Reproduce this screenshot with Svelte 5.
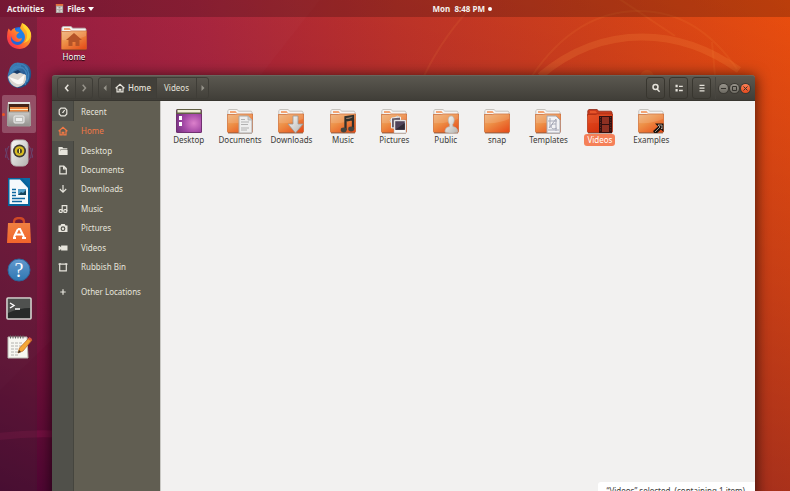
<script lang="ts">
type Place = { name: string; icon: string };

const places: Place[] = [
	{ name: 'Recent', icon: 'recent' },
	{ name: 'Home', icon: 'home' },
	{ name: 'Desktop', icon: 'folder' },
	{ name: 'Documents', icon: 'document' },
	{ name: 'Downloads', icon: 'download' },
	{ name: 'Music', icon: 'music' },
	{ name: 'Pictures', icon: 'camera' },
	{ name: 'Videos', icon: 'video' },
	{ name: 'Rubbish Bin', icon: 'bin' },
];

const files = ['Desktop', 'Documents', 'Downloads', 'Music', 'Pictures', 'Public', 'snap', 'Templates', 'Videos', 'Examples'];

const apps = ['Firefox', 'Thunderbird', 'Files', 'Rhythmbox', 'LibreOffice Writer', 'Ubuntu Software', 'Help', 'Terminal', 'Text Editor'];

let place = $state('Home');
let selected = $state('Videos');
</script>

{#snippet symbol(name: string)}
	<svg class="symbol" viewBox="0 0 10 10" aria-hidden="true">
		{#if name === 'recent'}
			<path class="line" d="M3 1.2h4L8.8 3v4L7 8.8H3L1.2 7V3zM5 5.4 6.7 3M4.2 5.5H5.5M3.4 1.1h3.2" />
		{:else if name === 'home'}
			<path class="line" d="M.6 5.3 5 1.2l4.4 4.1M2 4.6v4.2h2.2V6.4h1.6v2.4H8V4.6" />
		{:else if name === 'folder'}
			<path d="M.5 1h3.8l1 1.3h4v1.2H2.3v5.2H.5zM2.8 4.1h6.8V9H1z" />
		{:else if name === 'document'}
			<path class="line" d="M1.8 1.1h4l2.5 2.5v5.3H1.8zM5.6 1.4v2.4h2.5" />
		{:else if name === 'download'}
			<path class="line" d="M5 1v7M1.8 5 5 8.2 8.2 5" />
		{:else if name === 'music'}
			<path class="line" d="M4.2 7V1.700h4.600V7" />
			<rect class="line" x="1.200" y="5.600" width="3" height="2.800" rx="1" />
			<rect class="line" x="5.800" y="5.600" width="3" height="2.800" rx="1" />
		{:else if name === 'camera'}
			<path fill-rule="evenodd" d="M.5 2.5h2L3.3 1h3.4l.8 1.5h2V9h-9zM5 3.3a2.4 2.4 0 1 0 0 4.8 2.4 2.4 0 0 0 0-4.8" />
			<circle cx="5" cy="5.7" r="1.2" />
		{:else if name === 'video'}
			<path d="M.6 3h1.1l1.4 1.3V2.6h6.4v5H3.1V6L1.7 7.3H.6z" />
		{:else if name === 'bin'}
			<path class="line" d="M.5 2.1h9M1.7 2.1v6.8h6.6V2.1M2 1v1M8 1v1" />
		{:else if name === 'plus'}
			<path class="line" d="M5 2.3v5.4M2.3 5h5.4" />
		{:else if name === 'back'}
			<path class="line bold" d="M6.3 1.8 3.5 5l2.8 3.2" />
		{:else if name === 'forward'}
			<path class="line bold" d="M3.7 1.8 6.5 5 3.7 8.2" />
		{:else if name === 'left'}
			<path d="M6.5 2v6L3.5 5z" />
		{:else if name === 'right'}
			<path d="M3.5 2v6l3-3z" />
		{:else if name === 'search'}
			<circle class="line bold" cx="4.5" cy="4" r="2.5" />
			<path class="line bold" d="M6 6l2.6 2.8" />
		{:else if name === 'list'}
			<path d="M1.5 1.8h2.2v2.4H1.5zM1.5 6h2.2v2.4H1.5zM5 2.7h3.8v1.4H5zM5 6.8h3.8v1.4H5z" />
		{:else if name === 'menu'}
			<path d="M2.5 1.7h5v1.2h-5zM2.5 4.5h5v1.2h-5zM2.5 7.3h5v1.2h-5z" />
		{/if}
	</svg>
{/snippet}

{#snippet folder(name: string)}
	<svg class="folder" viewBox="0 0 26 26" aria-hidden="true">
		{#if name === 'Desktop'}
			<rect x="0" y="1" width="26" height="24" rx="1.5" fill="#713071" />
			<rect x="1" y="2" width="24" height="22" fill="url(#screen)" />
			<path fill="#616044" d="M1 1h24l1 5H0z" />
			<path fill="#eeeed5" d="M1.5 2h23v2.5h-23z" />
			<path fill="#fff" d="M3 8h3v4H3zM3 14h3v4H3z" />
		{:else}
			<path d="M.8 8V2.6L2 1.5h8l1.8 1.7h12.4l.8 1V8z" fill={name === 'Videos' ? '#c83b1d' : '#f5f4f2'} stroke={name === 'Videos' ? '#8f2816' : '#bbb7b2'} stroke-width=".8" />
			<path d="M3 3h5.5l1.5 2H3z" fill={name === 'Videos' ? '#e75529' : '#f3a575'} />
			<path d="M.3 6.500h8.5L10 6h15.7v17.7l-1 1H1.3l-1-1z" fill={name === 'Videos' ? 'url(#red)' : 'url(#orange)'} stroke={name === 'Videos' ? '#a52b11' : '#c8632d'} stroke-width=".7" />
			<path d="M1 15Q14 16 25 11v-5H10L9 7H1z" fill="#fff" opacity={name === 'Videos' ? 0.04 : 0.13} />
			<path d="M1 25h24" stroke="#55302080" />
		{/if}
		{#if name === 'Home'}
			<path d="M13 8l8 7h-2.5v6h-4v-4h-3v4h-4v-6H5z" fill="#b55428" />
		{:else if name === 'Documents'}
			<path d="M12 8h9l4 4v13H12z" fill="#eee" stroke="#aaa9a8" />
			<path d="M21 8v4h4" fill="#d1d1d1" stroke="#aaa" stroke-width=".7" />
			<path d="M14 11.5h4M14 14h8M14 16.5h7M14 20h8M14 22h6" stroke="#aaa" stroke-width=".9" />
		{:else if name === 'Downloads'}
			<path d="M15 8h5v8h5l-7.5 9L10 16h5z" fill="url(#silver)" stroke="#999" stroke-width=".8" />
		{:else if name === 'Music'}
			<path d="M15.5 22V9.3L23 8v13M15.5 12.5 23 11" fill="none" stroke="#30302c" stroke-width="2.3" />
			<ellipse cx="13.7" cy="22" rx="3" ry="2.4" fill="#44443e" />
			<ellipse cx="21.2" cy="21" rx="3" ry="2.4" fill="#44443e" />
			<path d="M16 10.5 22.5 9" stroke="#888" stroke-width=".6" />
		{:else if name === 'Pictures'}
			<path d="m9 12 8-4 4 9-8 4z" fill="#383140" stroke="#ddd" />
			<path d="m10.5 10 9-1v10l-9 1z" fill="#655b69" stroke="#eee" />
			<path d="M13 12h12v13H13z" fill="#f8f8f8" stroke="#aaa" stroke-width=".5" />
			<path d="M14.2 13.2h9.6v8.6h-9.6z" fill="#50445a" />
			<path d="m14.2 21.8 9.6-6.8v6.8z" fill="#302a36" />
		{:else if name === 'Public'}
			<path d="M12 24c0-4 2.5-5 4.5-5.4l.2-2.3C14.7 14.5 14.3 8 18.2 8s3.6 6.5 1.5 8.3l.2 2.3c2 .4 5 1.4 5 5.4-3 1.5-10 1.5-12.9 0z" fill="url(#silver)" stroke="#b5b2ae" stroke-width=".7" />
		{:else if name === 'Templates'}
			<path d="M12 8h9l4 4v13H12z" fill="#f2f2f4" stroke="#a5a8b0" />
			<path d="M13 22h11M14 20l7-9v12M13 13h9M15 10v10M21 16c-6-1-6 5-2 5l3-1" fill="none" stroke="#a7aab8" />
		{:else if name === 'Videos'}
			<path d="M12 8h13v17H12z" fill="#331010" />
			<path d="M15 9h7v7h-7zM15 17h7v7h-7z" fill="#8e3022" />
			<path d="M13.5 9v15M23.700 9v15" stroke="#8c4032" stroke-width=".7" stroke-dasharray="1 1.5" />
		{:else if name === 'Examples'}
			<path d="M17 15.500h8.500V24l-2.600-2.600-3.800 3.600h-3l-1-2 5-4.500z" fill="#171310" />
			<path d="m17 24 5-5-2-2h4v4l-1-1" fill="none" stroke="#e7d2c4" stroke-width=".7" />
		{/if}
	</svg>
{/snippet}

{#snippet appIcon(name: string)}
	<svg class="app-icon" viewBox="0 0 28 28" aria-hidden="true">
		{#if name === 'Firefox'}
			<circle cx="14" cy="15" r="10" fill="#2367d8" />
			<circle cx="15" cy="13" r="7" fill="#2080e8" />
			<path d="M3.5 6.5 6 9q1.5-2.5 4-3-.5 2 1.2 3.4l3.1.6-2.6 2.8q-1 2.7 1.5 3.7 2 .5 3.7-.5-.5 4-4.9 4-5-1-6-6-1 4.600 2 7.3 4 3 8 .6c5-3 5-9 1.4-12.6L15 6l2-5q7 3.5 9 10c1.5 10-4 15.5-11 16C7 27 2 22 2 14.500Q2 10 3.500 6.500" fill="url(#fox)" />
			<path d="M17 1q1 5 4.500 8 2 8-3 12 7-2 7.500-9Q24 4 17 1" fill="#ffde32" opacity=".8" />
		{:else if name === 'Thunderbird'}
			<path d="M4 10C5 3 11 0 16 2c8 0 11 7 10 13-1 8-7 12-13 12C5 26 0 18 4 10" fill="url(#bird)" />
			<path d="M3 16q4-5 10-5l8 3q1 6-2 9-4 4-8 3Q5 24 3 16" fill="#d9d6d0" />
			<path d="m4 16 9 3 7-6-2 9q-7 4-14-6" fill="#faf9f6" />
			<path d="M5 13Q8 4 16 5m-9 6q4-6 11-4m0 0c5 4 5 10 2 17M20 6c5 5 4 11 2 15M12 3q8-1 11 6" fill="none" stroke="#3e82ba" stroke-width="1.4" />
			<path d="m8 11 5-2 3 2-4 2z" fill="#173b66" />
		{:else if name === 'Files'}
			<path d="M3 2h22l1 8v16H2V10z" fill="#a2a09b" />
			<path d="M4 4h20v8H4z" fill="#452518" />
			<path d="M5 7h18v5H5z" fill="#e88740" />
			<path d="M5 9h18v1H5z" fill="#fff0c7" />
			<path d="M3 12h22v14H3z" fill="url(#drawer)" stroke="#9d9b98" />
			<path d="M3 3h22" stroke="#e5e4e1" stroke-width="2" />
			<rect x="9" y="16" width="10" height="7" rx="1" fill="#bfc0bd" stroke="#eee" />
			<path d="M11 18h6v3h-6z" fill="#f0f0ef" />
		{:else if name === 'Rhythmbox'}
			<path d="M4 7Q-1 14 4 21M24 7q5 7 0 14M1 9q-3 5 0 10M27 9q3 5 0 10" fill="none" stroke="#626095" opacity=".6" />
			<rect x="6" y="1" width="17" height="26" rx="5" fill="url(#silver)" stroke="#bab8b5" />
			<circle cx="14.500" cy="12" r="6.500" fill="#3d3b37" />
			<circle cx="14.500" cy="12" r="4.800" fill="#d8bc20" />
			<circle cx="14.500" cy="12" r="2.500" fill="#48432a" />
			<path d="M14.500 10v4" stroke="#fff07a" />
		{:else if name === 'LibreOffice Writer'}
			<path d="M3 0h15l7 8v20H3z" fill="#06649c" />
			<path d="M4.500 1.500H15L23 10v16H4.500z" fill="#f5fafc" />
			<path d="M17 0h8v9z" fill="#0b6aa4" />
			<path d="M7 11.500h4M7 14.500h4M7 17.500h4M7 20.500h13M7 23.500h10" stroke="#0e68a0" stroke-width="1.500" />
			<path d="M13 11h8v6h-8z" fill="#539fc9" />
			<path d="m13 17 3-3 2 1 3-3v5z" fill="#17455c" />
		{:else if name === 'Ubuntu Software'}
			<path d="M9 8V5q0-4 5-4t5 4v3" fill="none" stroke="#cf4926" stroke-width="2.300" />
			<path d="M3 6h22l1 20H2z" fill="url(#bag)" />
			<path d="m13 12-4 8M13 12h2l4 8M10 17.500h8M8 21h3M17 21h4" fill="none" stroke="#fff" stroke-width="2" />
		{:else if name === 'Help'}
			<circle cx="14" cy="14" r="11" fill="url(#help)" stroke="#2d6499" />
			<text class="question" x="14" y="21" text-anchor="middle">?</text>
		{:else if name === 'Terminal'}
			<rect x="2" y="3" width="24" height="21" rx="1" fill="#272a29" stroke="#d6d5d1" stroke-width="1.600" />
			<path d="M3 4h22v9Q14 13 3 18z" fill="#6a6c69" opacity=".6" />
			<path d="m5 8 4 2.500L5 13M10 14h5" fill="none" stroke="#fff" stroke-width="1.400" />
		{:else}
			<path d="M3 3h19l1 21H3z" fill="#f7f7f2" stroke="#bab8b1" />
			<path d="M5 3h15" stroke="#666" stroke-width="3" stroke-dasharray="1 1.500" />
			<path d="M6 9h12M6 12h11M6 15h8M6 18h7M6 21h8" stroke="#b2b2ae" stroke-dasharray="3 1" />
			<path d="m13 19 1.500-5L24 4l3 2-9 11z" fill="#f4a735" stroke="#b96520" stroke-width=".7" />
			<path d="m23 5 1.500-2L27 5l-1.400 2z" fill="#d95044" />
			<path d="m13 19 1-3 2 2z" fill="#333" />
		{/if}
	</svg>
{/snippet}

<svg class="defs" width="0" height="0" aria-hidden="true">
	<defs>
		<linearGradient id="orange" x2=".8" y2="1"><stop stop-color="#edb078" /><stop offset=".45" stop-color="#ed8f46" /><stop offset="1" stop-color="#e7501c" /></linearGradient>
		<linearGradient id="red" x2=".7" y2="1"><stop stop-color="#e54d20" /><stop offset="1" stop-color="#d02d0c" /></linearGradient>
		<linearGradient id="silver" x2="1" y2="1"><stop stop-color="#fafafa" /><stop offset="1" stop-color="#b5b4b0" /></linearGradient>
		<linearGradient id="drawer" y2="1" x2="0"><stop stop-color="#c9c8c5" /><stop offset="1" stop-color="#94928f" /></linearGradient>
		<radialGradient id="screen" cx=".7" cy=".6" r=".8"><stop stop-color="#dc80cb" /><stop offset=".55" stop-color="#a348a5" /><stop offset="1" stop-color="#73317f" /></radialGradient>
		<linearGradient id="fox" x1="1" x2="0" y2="1"><stop stop-color="#ffe52e" /><stop offset=".4" stop-color="#ff9825" /><stop offset=".75" stop-color="#ff443d" /><stop offset="1" stop-color="#e32867" /></linearGradient>
		<linearGradient id="bird" x2="1" y2="1"><stop stop-color="#448ac0" /><stop offset="1" stop-color="#153b72" /></linearGradient>
		<linearGradient id="bag" y2="1" x2="0"><stop stop-color="#f08042" /><stop offset="1" stop-color="#f2652b" /></linearGradient>
		<linearGradient id="help" y2="1" x2="0"><stop stop-color="#6399ce" /><stop offset="1" stop-color="#2f78b2" /></linearGradient>
	</defs>
</svg>

<div class="screen">
	<svg class="wallpaper" viewBox="0 0 790 491" preserveAspectRatio="none" aria-hidden="true">
		<path class="facet" d="M0 0h320L52 340 0 390z" />
		<path d="M424 76Q445 32 482-4M532 76q44-65 107-65 58 0 98 58" />
		<path d="M618-2 675 36M712 42l3 34" />
		<path class="wide" d="M540 76q46-39 102-39 51 0 97 33" />
		<path class="broad" d="M-5 437q30-4 60-3" />
		<circle class="spot" cx="647" cy="77" r="7" />
	</svg>

	<header class="topbar">
		<button>Activities</button>
		<button class="app-menu">
			<svg viewBox="0 0 10 10" aria-hidden="true">
				<path d="M1 0h8v10H1z" fill="#aaa49e" />
				<path d="M1 0h8v2H1z" fill="#e56f39" />
				<path d="M2 3h6v2.500H2zM2 6.500h6V9H2z" fill="#d8d5d1" />
				<path d="M4 4.200h2M4 7.700h2" stroke="#777" />
			</svg>
			Files
			<span class="caret"></span>
		</button>
		<button class="clock">Mon&nbsp; 8:48 PM <span class="dot"></span></button>
	</header>

	<div class="workspace">
		<nav class="dock" aria-label="Dock">
			{#each apps as app}
				<button class:running={app === 'Files'} aria-label={app}>
					{@render appIcon(app)}
				</button>
			{/each}
		</nav>

		<main class="desktop">
			<button class="desktop-icon">
				{@render folder('Home')}
				<span>Home</span>
			</button>

			<section class="window" aria-label="Home">
				<header class="titlebar">
					<div class="group">
						<button aria-label="Back">{@render symbol('back')}</button>
						<button class="dim" aria-label="Forward">{@render symbol('forward')}</button>
					</div>
					<div class="group path">
						<button class="narrow dim" aria-label="Scroll left">{@render symbol('left')}</button>
						<button class="crumb current">{@render symbol('home')} Home</button>
						<button class="crumb">Videos</button>
						<button class="narrow dim" aria-label="Scroll right">{@render symbol('right')}</button>
					</div>
					<div class="tools">
						<button aria-label="Search">{@render symbol('search')}</button>
						<button aria-label="List view">{@render symbol('list')}</button>
						<button aria-label="Menu">{@render symbol('menu')}</button>
					</div>
					<div class="controls">
						<button aria-label="Minimise"><svg viewBox="0 0 9 9"><path d="M2 4.500h5" /></svg></button>
						<button aria-label="Maximise"><svg viewBox="0 0 9 9"><path d="M2.500 2.500h4v4h-4z" /></svg></button>
						<button class="close" aria-label="Close"><svg viewBox="0 0 9 9"><path d="m2.500 2.500 4 4m0-4-4 4" /></svg></button>
					</div>
				</header>

				<div class="body">
					<nav class="sidebar" aria-label="Places">
						<div class="places">
							{#each places as item}
								<button class="place" class:active={place === item.name} onclick={() => place = item.name}>
									<span class="rail">{@render symbol(item.icon)}</span>
									{item.name}
								</button>
							{/each}
						</div>
						<button class="place other">
							<span class="rail">{@render symbol('plus')}</span>
							Other Locations
						</button>
					</nav>

					<div class="content">
						<div class="files">
							{#each files as file}
								<button class="file" class:selected={selected === file} onclick={() => selected = file}>
									{@render folder(file)}
									<span>{file}</span>
								</button>
							{/each}
						</div>
						<div class="status">“{selected}” selected&nbsp; (containing 1 item)</div>
					</div>
				</div>
			</section>
		</main>
	</div>
</div>

<style>
	:global(body) {
		margin: 0;
		overflow: hidden;
	}

	.defs {
		position: absolute;
	}

	.screen {
		position: relative;
		display: flex;
		flex-direction: column;
		height: 100vh;
		overflow: hidden;
		font: 8px/12px "Noto Sans", "Open Sans", sans-serif;
		background:
			linear-gradient(200deg, transparent 0%, rgba(60, 0, 48, 0.2) 37%, rgba(60, 0, 48, 0.37) 63%, rgba(60, 0, 48, 0.55) 82%, rgba(60, 0, 48, 0.85) 100%),
			linear-gradient(to right, #a82042 0%, #ba283e 25%, #cb3828 50%, #d84418 75%, #ea4e0e 100%);
	}

	button {
		font: inherit;
		color: inherit;
		border: 0;
		padding: 0;
		margin: 0;
		background: none;
	}

	.wallpaper {
		position: absolute;
		inset: 0;
		width: 100%;
		height: 100%;
		fill: none;
		stroke: #ff9a46;
		stroke-opacity: 0.1;
		stroke-width: 2;

		.facet {
			fill: #fff;
			fill-opacity: 0.015;
			stroke: none;
		}

		.wide {
			stroke-width: 7;
			stroke-opacity: 0.18;
		}

		.broad {
			stroke: #d22773;
			stroke-width: 7;
			stroke-opacity: 0.16;
		}

		.spot {
			fill: #ff8a39;
			fill-opacity: 0.15;
			stroke: none;
		}
	}

	.topbar {
		position: relative;
		display: flex;
		align-items: center;
		gap: 11px;
		height: 17px;
		padding-left: 7px;
		color: #f4f0ee;
		font-weight: 700;
		background: rgba(0, 0, 0, 0.2);

		button {
			display: flex;
			align-items: center;
			gap: 3px;
		}
	}

	.app-menu svg {
		width: 9px;
		height: 9px;
	}

	.caret {
		border: 3px solid transparent;
		border-top: 4px solid #fff;
		border-bottom: 0;
	}

	.clock {
		margin-left: auto;
		margin-right: 298px;
	}

	.dot {
		width: 4px;
		height: 4px;
		border-radius: 50%;
		background: #fff;
	}

	.workspace {
		position: relative;
		display: flex;
		flex: 1;
		min-height: 0;
	}

	.dock {
		display: flex;
		flex-direction: column;
		gap: 1px;
		width: 37px;
		box-sizing: border-box;
		padding: 0 1px 0 2px;
		background: rgba(60, 40, 50, 0.28);

		button {
			position: relative;
			display: grid;
			place-items: center;
			height: 38px;
			border-radius: 2px;
		}

		.running {
			background: rgba(255, 255, 255, 0.22);

			&::before {
				content: '';
				position: absolute;
				left: 0;
				width: 3px;
				height: 3px;
				border-radius: 50%;
				background: #f05322;
			}
		}
	}

	.app-icon {
		width: 28px;
		height: 28px;
	}

	.question {
		fill: #fff;
		font: 20px "Liberation Serif", serif;
	}

	.desktop {
		display: flex;
		flex: 1;
		flex-direction: column;
		min-width: 0;
		padding: 8px 35px 0 15px;
	}

	.desktop-icon {
		display: flex;
		flex-direction: column;
		align-items: center;
		align-self: flex-start;
		width: 44px;
		height: 50px;
		color: #fff;
		text-shadow: 0 1px 1px #000;
	}

	.folder {
		display: block;
		width: 26px;
		height: 26px;
	}

	.window {
		display: flex;
		flex: 1;
		flex-direction: column;
		margin-bottom: -10px;
		border-radius: 3px 3px 0 0;
		box-shadow: 0 2px 14px 1px rgba(0, 0, 0, 0.65);
	}

	.titlebar {
		display: flex;
		align-items: center;
		height: 26px;
		box-sizing: border-box;
		padding: 0 5px;
		color: #e6e3db;
		background: linear-gradient(#5b5850, #403e38);
		border-top: 1px solid #69665e;
		border-bottom: 1px solid #383630;
		border-radius: 3px 3px 0 0;

		.symbol {
			width: 10px;
			height: 10px;
		}
	}

	.group {
		display: flex;
		height: 22px;
		box-sizing: border-box;
		border: 1px solid #3f3d37;
		border-radius: 3px;

		button {
			display: flex;
			align-items: center;
			justify-content: center;
			gap: 3px;
			width: 17px;
		}

		button + button {
			border-left: 1px solid #3f3d37;
		}

		.narrow {
			width: 12px;
		}

		.crumb {
			width: auto;
			padding: 0 7px;
		}

		.current {
			padding: 0 5px 0 3px;
			background: #42403a;
			font-weight: 500;
		}

		.dim {
			color: #96938a;
		}
	}

	.path {
		margin-left: 5px;
	}

	.tools {
		display: flex;
		gap: 4px;
		margin-left: auto;
		padding-right: 4px;
		border-right: 1px solid #47453f;

		button {
			display: grid;
			place-items: center;
			width: 19px;
			height: 22px;
			border: 1px solid #38362f;
			border-radius: 3px;
		}
	}

	.controls {
		display: flex;
		gap: 2px;
		margin-left: 3px;

		button {
			width: 9px;
			height: 9px;
			border-radius: 50%;
			background: linear-gradient(#99958c, #6c6961);
			box-shadow: 0 0 0 1px #3b3933;
		}

		.close {
			background: linear-gradient(#ff8054, #e84a1d);
		}

		svg {
			display: block;
			fill: none;
			stroke: #35332e;
		}
	}

	.symbol {
		width: 10px;
		height: 10px;
		fill: currentColor;
	}

	.line {
		fill: none;
		stroke: currentColor;
		stroke-width: 1.2;

		&.bold {
			stroke-width: 1.5;
		}
	}

	.body {
		display: flex;
		flex: 1;
		min-height: 0;
	}

	.sidebar {
		width: 108px;
		color: #e6e4dc;
		background: linear-gradient(to right, #50504a 21px, #45453e 21px 22px, #615e52 22px);
	}

	.places {
		display: flex;
		flex-direction: column;
		height: 175px;
		padding-top: 1px;
	}

	.place {
		display: flex;
		flex: 1;
		align-items: center;
		gap: 7px;
		width: 100%;
		text-align: left;

		&.active {
			color: #f27845;
			background: #615e52;
		}
	}

	.rail {
		display: grid;
		place-items: center;
		width: 22px;
	}

	.other {
		height: 20px;
		margin-top: 5px;
	}

	.content {
		position: relative;
		flex: 1;
		border-left: 1px solid #c9c8c4;
		background: #f2f1f0;
	}

	.files {
		display: grid;
		grid-template-columns: repeat(10, 1fr);
		max-width: 514px;
		padding: 7px 0 0 2px;
	}

	.file {
		display: flex;
		flex-direction: column;
		align-items: center;
		color: #3c3b38;

		span {
			padding: 0 3px;
			border-radius: 3px;
		}

		&.selected span {
			color: #fff;
			background: #f58058;
		}
	}

	.status {
		position: absolute;
		right: 0;
		bottom: 0;
		padding: 3px 10px 4px 8px;
		border-radius: 3px 0 0;
		color: #3c3b38;
		background: #fff;
	}
</style>
